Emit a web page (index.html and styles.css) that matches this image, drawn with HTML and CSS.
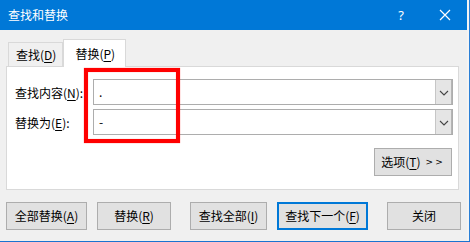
FILE: index.html
```html
<!DOCTYPE html>
<html lang="zh-CN">
<head>
<meta charset="utf-8">
<title>查找和替换</title>
<link rel="stylesheet" href="styles.css">
</head>
<body>
<div class="screen">
  <div class="dialog">
    <div class="titlebar">
      <span class="title">查找和替换</span>
      <div class="caption-btns">
        <span class="cap help">?</span>
        <span class="cap close"><svg width="12" height="12" viewBox="0 0 12 12"><path d="M1 1 L11 11 M11 1 L1 11" stroke="#fff" stroke-width="1.2" fill="none"/></svg></span>
      </div>
    </div>
    <div class="body">
      <div class="tabs">
        <div class="tab">查找(<u>D</u>)</div>
        <div class="tab active">替换(<u>P</u>)</div>
      </div>
      <div class="panel">
        <div class="row">
          <span class="label">查找内容(<u>N</u>):</span>
          <div class="combo"><span class="val">.</span><span class="drop"><svg width="10" height="6" viewBox="0 0 10 6"><path d="M1 1 L5 5 L9 1" stroke="#444" stroke-width="1.1" fill="none"/></svg></span></div>
        </div>
        <div class="row">
          <span class="label">替换为(<u>E</u>):</span>
          <div class="combo"><span class="val">-</span><span class="drop"><svg width="10" height="6" viewBox="0 0 10 6"><path d="M1 1 L5 5 L9 1" stroke="#444" stroke-width="1.1" fill="none"/></svg></span></div>
        </div>
        <div class="opt-row">
          <div class="btn opt">选项(<u>T</u>) <span class="arrows">&gt;&gt;</span></div>
        </div>
      </div>
      <div class="actions">
        <div class="btn b-all">全部替换(<u>A</u>)</div>
        <div class="btn b-rep">替换(<u>R</u>)</div>
        <div class="btn b-findall">查找全部(<u>I</u>)</div>
        <div class="btn b-next default">查找下一个(<u>F</u>)</div>
        <div class="btn b-close">关闭</div>
      </div>
    </div>
  </div>
  <div class="edge"></div>
  <div class="highlight"></div>
</div>
</body>
</html>
```

FILE: styles.css
```css
* { box-sizing: border-box; }
html, body { margin: 0; padding: 0; }
body {
  width: 470px;
  height: 242px;
  overflow: hidden;
  font-family: "Noto Sans CJK SC", "Microsoft YaHei", sans-serif;
  font-size: 12px;
  color: #000;
  background: #f0f0f0;
}
u { text-decoration: underline; text-underline-offset: 2px; text-decoration-thickness: 1px; }

.screen {
  position: relative;
  display: flex;
  width: 470px;
  height: 242px;
  border-bottom: 1px solid #1a73d0;
}
.dialog {
  width: 467px;
  height: 241px;
  background: #f0f0f0;
  display: flex;
  flex-direction: column;
}
.edge {
  width: 3px;
  background: #f4f4f4;
  border-right: 1px solid #2a7fd6;
}

.titlebar {
  height: 30px;
  background: #0078d7;
  color: #fff;
  display: flex;
  align-items: center;
  justify-content: space-between;
  padding-left: 8px;
}
.title { font-size: 12px; line-height: 16px; }
.caption-btns { display: flex; height: 30px; }
.cap {
  width: 45px;
  height: 30px;
  display: flex;
  align-items: center;
  justify-content: center;
}
.help { font-family: "Segoe UI", "Noto Sans", sans-serif; font-size: 13px; padding-left: 1px; }
.close { width: 44px; padding-right: 1px; }

.body {
  flex: 1;
  display: flex;
  flex-direction: column;
  padding: 0 8px 0 6px;
}

.tabs {
  display: flex;
  align-items: flex-end;
  height: 28px;
  margin-top: 9px;
  margin-bottom: -1px;
  padding-left: 2px;
  position: relative;
  z-index: 1;
}
.tab {
  height: 24px;
  border: 1px solid #d9d9d9;
  border-bottom: none;
  background: #f0f0f0;
  padding: 0 6px 0 7px;
  display: flex;
  align-items: center;
  padding-top: 1px;
  line-height: 16px;
  margin-bottom: 1px;
}
.tab.active {
  height: 28px;
  margin-bottom: 0;
  background: #fff;
  padding: 0 10px 0 11px;
  border-left: 1px solid #d9d9d9;
}

.panel {
  height: 124px;
  background: #fff;
  border: 1px solid #d9d9d9;
  padding: 12px 5px 0 8px;
  display: flex;
  flex-direction: column;
  gap: 4px;
}
.row {
  display: flex;
  align-items: center;
  height: 26px;
}
.label {
  width: 78px;
  flex: none;
  line-height: 16px;
  padding-top: 1px;
}
.combo {
  flex: 1;
  height: 26px;
  border: 1px solid #adadad;
  display: flex;
  align-items: stretch;
  background: #fff;
}
.val {
  flex: 1;
  padding-left: 5px;
  display: flex;
  align-items: center;
  line-height: 16px;
}
.drop {
  width: 17px;
  background: #e5e5e5;
  border-left: 1px solid #c6c6c6;
  border-right: 1px solid #b5b5b5;
  display: flex;
  align-items: center;
  justify-content: center;
  padding-top: 1px;
}

.opt-row {
  display: flex;
  justify-content: flex-end;
  margin-top: 9px;
  padding-right: 1px;
}

.btn {
  height: 28px;
  background: #e1e1e1;
  border: 1px solid #adadad;
  display: flex;
  align-items: center;
  justify-content: center;
  line-height: 16px;
  flex: none;
}
.opt { width: 78px; }
.arrows { font-family: "DejaVu Sans", sans-serif; font-size: 9px; letter-spacing: 2px; margin-left: 5px; }

.actions {
  display: flex;
  margin-top: 12px;
}
.b-all { width: 81px; }
.b-rep { width: 74px; margin-left: 10px; }
.b-findall { width: 77px; margin-left: 19px; }
.b-next { width: 91px; margin-left: 10px; }
.b-close { width: 74px; margin-left: 19px; }
.default { border: 2px solid #0078d7; }

.highlight {
  position: absolute;
  left: 84px;
  top: 68px;
  width: 96px;
  height: 75px;
  border: 4px solid #ff0000;
  box-shadow: 0 0 1px rgba(255,0,0,0.6), inset 0 0 1px rgba(255,0,0,0.6);
  pointer-events: none;
}
```
